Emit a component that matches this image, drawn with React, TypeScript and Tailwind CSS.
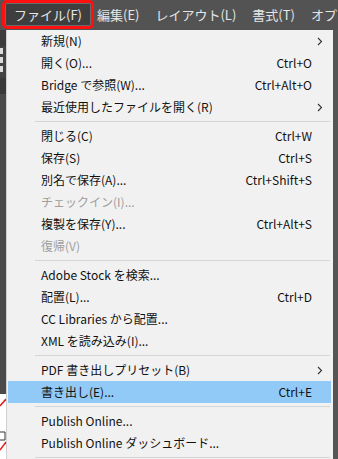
import React from 'react';

type Item =
  | { kind: 'sep' }
  | { kind: 'item'; label: string; shortcut?: string; sub?: boolean; disabled?: boolean; active?: boolean };

const items: Item[] = [
  { kind: 'item', label: '新規(N)', sub: true },
  { kind: 'item', label: '開く(O)...', shortcut: 'Ctrl+O' },
  { kind: 'item', label: 'Bridge で参照(W)...', shortcut: 'Ctrl+Alt+O' },
  { kind: 'item', label: '最近使用したファイルを開く(R)', sub: true },
  { kind: 'sep' },
  { kind: 'item', label: '閉じる(C)', shortcut: 'Ctrl+W' },
  { kind: 'item', label: '保存(S)', shortcut: 'Ctrl+S' },
  { kind: 'item', label: '別名で保存(A)...', shortcut: 'Ctrl+Shift+S' },
  { kind: 'item', label: 'チェックイン(I)...', disabled: true },
  { kind: 'item', label: '複製を保存(Y)...', shortcut: 'Ctrl+Alt+S' },
  { kind: 'item', label: '復帰(V)', disabled: true },
  { kind: 'sep' },
  { kind: 'item', label: 'Adobe Stock を検索...' },
  { kind: 'item', label: '配置(L)...', shortcut: 'Ctrl+D' },
  { kind: 'item', label: 'CC Libraries から配置...' },
  { kind: 'item', label: 'XML を読み込み(I)...' },
  { kind: 'sep' },
  { kind: 'item', label: 'PDF 書き出しプリセット(B)', sub: true },
  { kind: 'item', label: '書き出し(E)...', shortcut: 'Ctrl+E', active: true },
  { kind: 'sep' },
  { kind: 'item', label: 'Publish Online...' },
  { kind: 'item', label: 'Publish Online ダッシュボード...' },
  { kind: 'sep' },
];

const menus = ['編集(E)', 'レイアウト(L)', '書式(T)', 'オプ'];

function Chevron() {
  return (
    <svg width="6" height="9" viewBox="0 0 6 9" className="absolute right-[8px]">
      <path d="M1 1 L4.5 4.5 L1 8" fill="none" stroke="#333" strokeWidth="1.1" />
    </svg>
  );
}

export default function App() {
  return (
    <div
      className="w-[338px] h-[459px] overflow-hidden bg-[#535353] flex flex-col"
      style={{ fontFamily: '"Noto Sans CJK JP", "Noto Sans", sans-serif' }}
    >
      {/* menu bar */}
      <div className="h-[30px] flex items-start text-[13px] text-[#e6e6e6] shrink-0 overflow-hidden">
        <div className="ml-[2px] w-[92px] h-[29px] shrink-0 border-[3px] border-[#ff1010] rounded-[5px] flex items-center">
          <div className="w-full h-full rounded-[2px] bg-[#3e3e3e] border border-[#6a6a6a] flex items-center pl-[8px] whitespace-nowrap">
            ファイル(F)
          </div>
        </div>
        {menus.map((m, i) => (
          <div
            key={m}
            className={`h-[29px] flex items-center shrink-0 whitespace-nowrap ${i === 0 ? 'ml-[3px]' : 'ml-[16px]'}`}
          >
            {m}
          </div>
        ))}
      </div>

      <div className="flex flex-1">
        {/* strip of the document behind the menu */}
        <div className="w-[6px] flex flex-col shrink-0">
          <div className="h-[16px] bg-[#3c3c3c]" />
          <div className="h-[32px] bg-[#444] flex flex-col gap-[3px] pt-[2px]">
            <div className="h-[6px] w-[3px] bg-[#dcdcdc]" />
            <div className="h-[6px] w-[3px] bg-[#dcdcdc]" />
            <div className="h-[6px] w-[3px] bg-[#dcdcdc]" />
          </div>
          <div className="h-[16px] bg-[#3a3a3a]" />
          <div className="h-[300px] bg-[#4a4a4a]" />
          <div className="flex-1 bg-white relative">
            <svg width="6" height="64" className="absolute top-0 left-0">
              <path d="M0 12 L6 5" stroke="#e02020" strokeWidth="1.5" />
              <path d="M0 56 L6 48" stroke="#e02020" strokeWidth="1.5" />
              <path d="M0 38 L5 38 L5 46 L0 46" stroke="#333" fill="none" />
            </svg>
          </div>
        </div>

        {/* dropdown */}
        <div className="w-[327px] bg-[#f1f1f1] border-l border-[#cfcfcf] flex flex-col text-[12px] text-[#111] shrink-0">
          {items.map((it, i) =>
            it.kind === 'sep' ? (
              <div key={i} className="h-[7px] flex items-center pl-[28px] pr-[3px]">
                <div className="h-px w-full bg-[#d5d5d5]" />
              </div>
            ) : (
              <div
                key={i}
                className={`relative h-[22px] mx-[1px] mr-[2px] flex items-center pl-[33px] pr-[19px] ${
                  it.active ? 'bg-[#91c9f7]' : ''
                } ${it.disabled ? 'text-[#9e9e9e]' : ''}`}
              >
                <span className="flex-1 whitespace-nowrap">{it.label}</span>
                {it.shortcut && <span className="whitespace-nowrap">{it.shortcut}</span>}
                {it.sub && <Chevron />}
              </div>
            )
          )}
        </div>
        <div className="flex-1 bg-[#555]" />
      </div>
    </div>
  );
}
